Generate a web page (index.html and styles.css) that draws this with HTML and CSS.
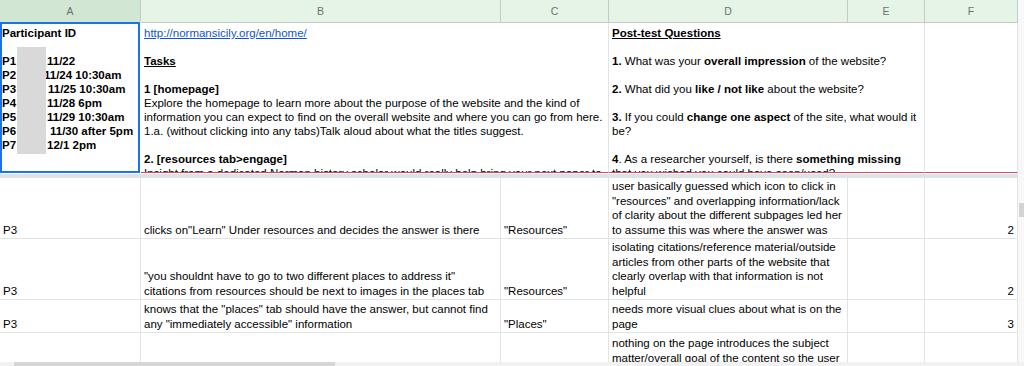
FILE: index.html
```html
<!DOCTYPE html>
<html lang="en">
<head>
  <meta charset="UTF-8" />
  <title>Usability test notes</title>
  <link rel="stylesheet" href="styles.css">
</head>
<body>

  <div class="sheet">
    <div class="grid">
      <div class="row heads">
        <div class="head selected">A</div>
        <div class="head">B</div>
        <div class="head">C</div>
        <div class="head">D</div>
        <div class="head">E</div>
        <div class="head">F</div>
      </div>

      <div class="row frozen">
        <div class="cell active">
          <div class="redact"></div>
          <div><b>Participant ID</b></div>
          <div>&nbsp;</div>
          <div><b class="pid">P1</b><b>11/22</b></div>
          <div><b class="pid">P2</b><b class="early">11/24 10:30am</b></div>
          <div><b class="pid">P3</b><b class="late">11/25 10:30am</b></div>
          <div><b class="pid">P4</b><b>11/28 6pm</b></div>
          <div><b class="pid">P5</b><b>11/29 10:30am</b></div>
          <div><b class="pid">P6</b><b class="later">11/30 after 5pm</b></div>
          <div><b class="pid">P7</b><b>12/1 2pm</b></div>
        </div>
        <div class="cell span2 red-edge">
          <div><a href="#">http://normansicily.org/en/home/</a></div>
          <div>&nbsp;</div>
          <div><b class="u">Tasks</b></div>
          <div>&nbsp;</div>
          <div><b>1 [homepage]</b></div>
          <div>Explore the homepage to learn more about the purpose of the website and the kind of</div>
          <div>information you can expect to find on the overall website and where you can go from here.</div>
          <div>1.a. (without clicking into any tabs)Talk aloud about what the titles suggest.</div>
          <div>&nbsp;</div>
          <div><b>2. [resources tab&gt;engage]</b></div>
          <div>Insight from a dedicated Norman history scholar would really help bring your next paper to</div>
        </div>
        <div class="cell span2 red-edge">
          <div><b class="u">Post-test Questions</b></div>
          <div>&nbsp;</div>
          <div><b>1.</b> What was your <b>overall impression</b> of the website?</div>
          <div>&nbsp;</div>
          <div><b>2.</b> What did you <b>like / not like</b> about the website?</div>
          <div>&nbsp;</div>
          <div><b>3.</b> If you could <b>change one aspect</b> of the site, what would it</div>
          <div>be?</div>
          <div>&nbsp;</div>
          <div><b>4</b>. As a researcher yourself, is there <b>something missing</b></div>
          <div>that you wished you could have seen/used?</div>
        </div>
        <div class="cell red-edge"></div>
      </div>

      <div class="freeze-bar"></div>

      <div class="row r2">
        <div class="cell">P3</div>
        <div class="cell">clicks on"Learn" Under resources and decides the answer is there</div>
        <div class="cell">"Resources"</div>
        <div class="cell">
          <div>user basically guessed which icon to click in</div>
          <div>"resources" and overlapping information/lack</div>
          <div>of clarity about the different subpages led her</div>
          <div>to assume this was where the answer was</div>
        </div>
        <div class="cell"></div>
        <div class="cell num">2</div>
      </div>

      <div class="row r3">
        <div class="cell">P3</div>
        <div class="cell">
          <div>"you shouldnt have to go to two different places to address it"</div>
          <div>citations from resources should be next to images in the places tab</div>
        </div>
        <div class="cell">"Resources"</div>
        <div class="cell">
          <div>isolating citations/reference material/outside</div>
          <div>articles from other parts of the website that</div>
          <div>clearly overlap with that information is not</div>
          <div>helpful</div>
        </div>
        <div class="cell"></div>
        <div class="cell num">2</div>
      </div>

      <div class="row r4">
        <div class="cell">P3</div>
        <div class="cell">
          <div>knows that the "places" tab should have the answer, but cannot find</div>
          <div>any "immediately accessible" information</div>
        </div>
        <div class="cell">"Places"</div>
        <div class="cell">
          <div>needs more visual clues about what is on the</div>
          <div>page</div>
        </div>
        <div class="cell"></div>
        <div class="cell num">3</div>
      </div>

      <div class="row r5">
        <div class="cell"></div>
        <div class="cell"></div>
        <div class="cell"></div>
        <div class="cell top">
          <div>nothing on the page introduces the subject</div>
          <div>matter/overall goal of the content so the user</div>
        </div>
        <div class="cell"></div>
        <div class="cell"></div>
      </div>
    </div>
    <div class="vscroll"><div class="thumb"></div></div>
  </div>
  <div class="hscroll"><div class="thumb"></div></div>

</body>
</html>
```

FILE: styles.css
```css
body {
  margin: 0;
  height: 366px;
  overflow: hidden;
  background: #fff;
  font-family: "Liberation Sans", Arial, sans-serif;
  font-size: 11.5px;
  color: #000;
}

.sheet {
  display: flex;
  height: 362px;
  overflow: hidden;
}

.grid {
  width: 1018px;
}

.row {
  display: grid;
  grid-template-columns: 141px 360px 108px 239px 77px 93px;
}

.head {
  height: 23px;
  box-sizing: border-box;
  border-right: 1px solid #c4cbc5;
  border-bottom: 1px solid #c4cbc5;
  background: #e6f3e7;
  color: #6d726e;
  font-size: 10.5px;
  display: flex;
  align-items: center;
  justify-content: center;
}

.head.selected {
  background: #d2e6d4;
}

.cell {
  box-sizing: border-box;
  border-right: 1px solid #e2e3e3;
  border-bottom: 1px solid #e2e3e3;
  padding: 0 3px 1px;
  display: flex;
  flex-direction: column;
  justify-content: flex-end;
  overflow: hidden;
  white-space: nowrap;
  line-height: 14.5px;
}

.span2 {
  grid-column: span 2;
}

.frozen .cell {
  height: 150px;
  justify-content: flex-start;
  padding-top: 3px;
  line-height: 14px;
}

.frozen .cell.active {
  position: relative;
  padding-left: 2px;
  border-color: #fff;
  box-shadow: inset 0 0 0 2px #1a73e8;
  margin-top: -1px;
  padding-top: 4px;
  height: 152px;
}

.redact {
  position: absolute;
  left: 17px;
  top: 25px;
  width: 29px;
  height: 107px;
  background: #d9d9d9;
}

.pid {
  display: inline-block;
  width: 45px;
}

.early { margin-left: -3px; }
.late { margin-left: 1px; }
.later { margin-left: 3px; }

.red-edge {
  border-bottom-color: #c8505e;
}

a {
  color: #1155cc;
}

.u {
  text-decoration: underline;
}

.freeze-bar {
  height: 4px;
  background: #dde2e8;
}

.r2 .cell { height: 61px; }
.r3 .cell { height: 61px; }
.r4 .cell { height: 33px; }
.r5 .cell { height: 40px; }

.cell.top {
  justify-content: flex-start;
  padding-top: 3px;
}

.cell.num {
  text-align: right;
  padding-right: 3px;
}

.vscroll {
  width: 6px;
  background: #f8f8f8;
  position: relative;
}

.vscroll .thumb {
  position: absolute;
  top: 203px;
  left: 1px;
  width: 5px;
  height: 14px;
  background: #d3d3d3;
}

.hscroll {
  height: 4px;
  background: #f1f1f1;
  padding-left: 14px;
}

.hscroll .thumb {
  width: 321px;
  height: 4px;
  background: #d6d6d6;
}
```
